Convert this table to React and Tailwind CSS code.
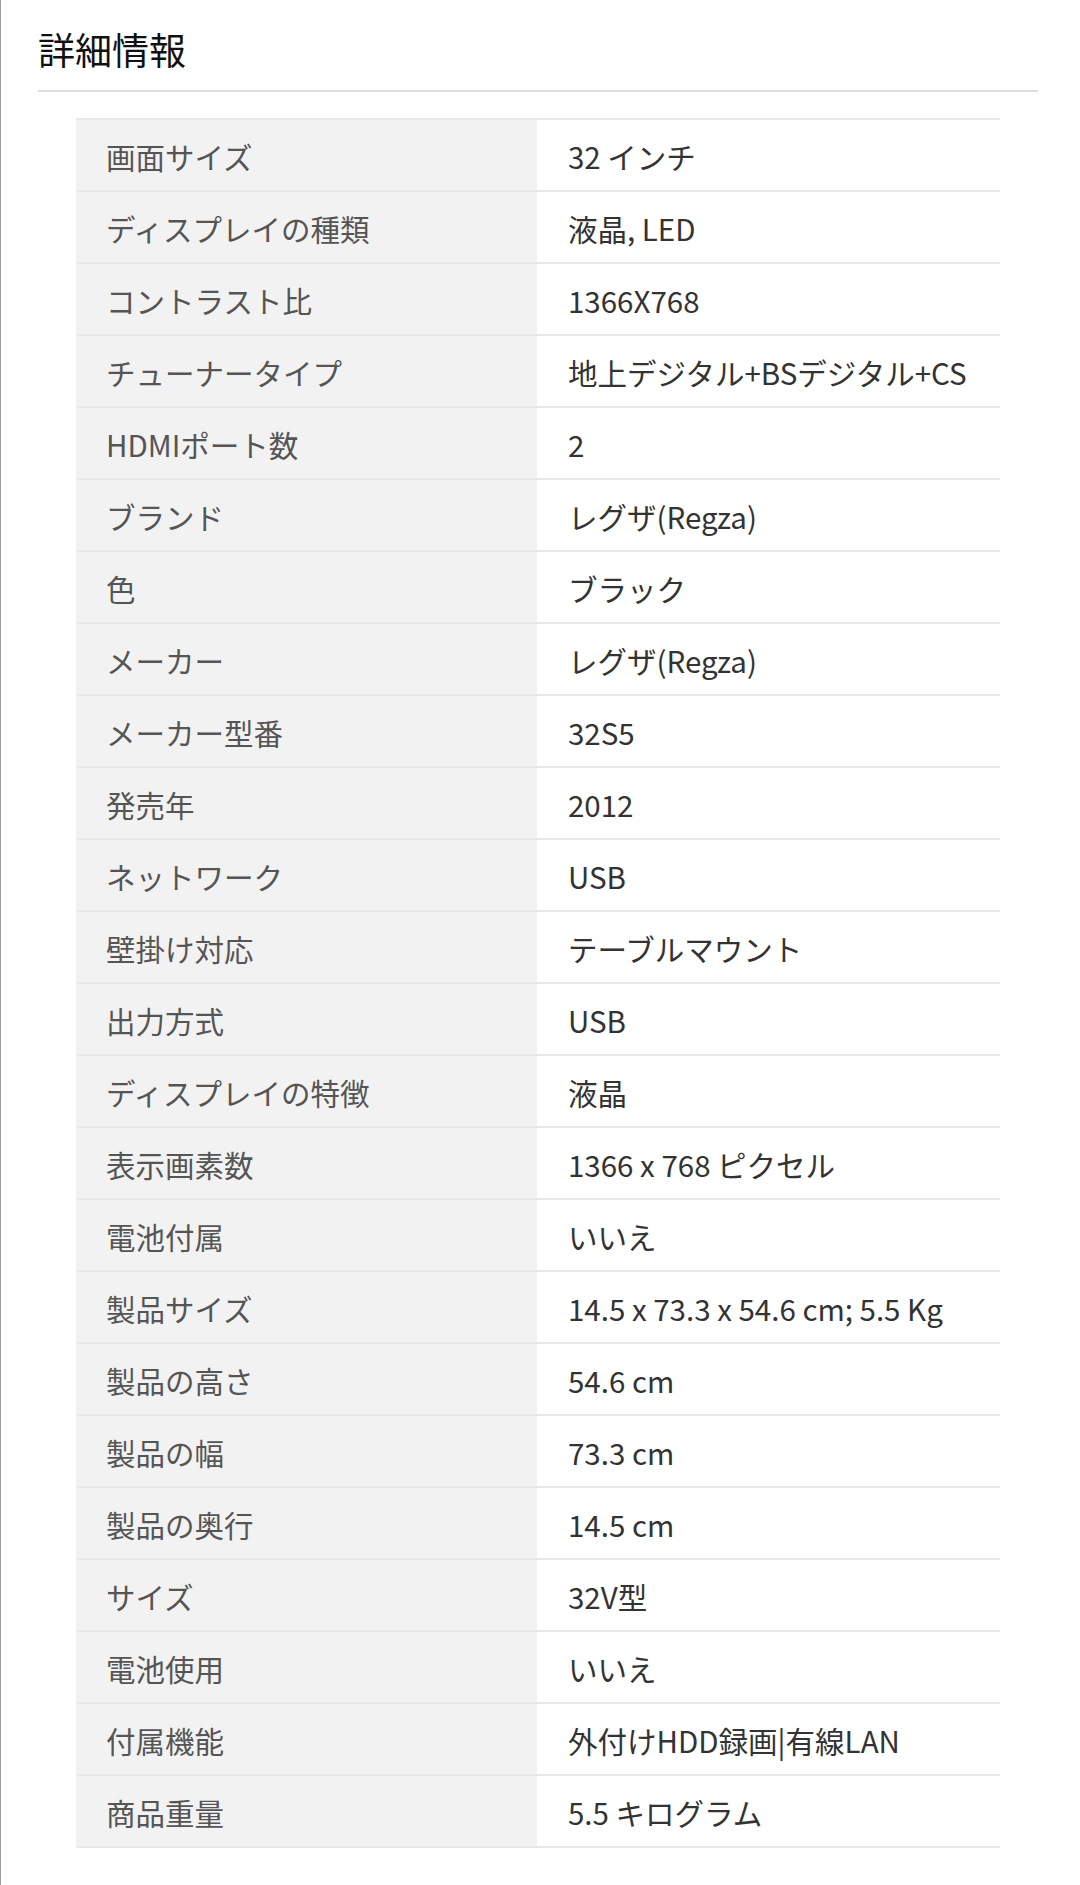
const rows = [
  ['画面サイズ', '32 インチ'],
  ['ディスプレイの種類', '液晶, LED'],
  ['コントラスト比', '1366X768'],
  ['チューナータイプ', '地上デジタル+BSデジタル+CS'],
  ['HDMIポート数', '2'],
  ['ブランド', 'レグザ(Regza)'],
  ['色', 'ブラック'],
  ['メーカー', 'レグザ(Regza)'],
  ['メーカー型番', '32S5'],
  ['発売年', '2012'],
  ['ネットワーク', 'USB'],
  ['壁掛け対応', 'テーブルマウント'],
  ['出力方式', 'USB'],
  ['ディスプレイの特徴', '液晶'],
  ['表示画素数', '1366 x 768 ピクセル'],
  ['電池付属', 'いいえ'],
  ['製品サイズ', '14.5 x 73.3 x 54.6 cm; 5.5 Kg'],
  ['製品の高さ', '54.6 cm'],
  ['製品の幅', '73.3 cm'],
  ['製品の奥行', '14.5 cm'],
  ['サイズ', '32V型'],
  ['電池使用', 'いいえ'],
  ['付属機能', '外付けHDD録画|有線LAN'],
  ['商品重量', '5.5 キログラム'],
]

const App = () => {
  return (
    <div
      className="min-h-[1885px] bg-white border-l border-[#a0a0a0]"
      style={{ fontFamily: '"Noto Sans CJK JP", "Noto Sans", sans-serif' }}
    >
      <div className="ml-[37px] w-[1000px] pt-[22px]">
        <h2 className="text-[37px] leading-[54px] text-[#111111] font-normal">詳細情報</h2>
        <div className="mt-[14px] h-[2px] bg-[#dddddd]"></div>
      </div>

      <div className="ml-[75px] mt-[26px] w-[924px] border-b-2 border-[#e8e8e8]">
        {rows.map(([label, value]) => (
          <div key={label} className="flex border-t-2 border-[#e8e8e8] h-[72px]">
            <div className="w-[461px] bg-[#f2f2f2] pl-[30px] pt-[3px] flex items-center text-[29.5px] text-[#555555]">
              {label}
            </div>
            <div className="flex-1 pl-[31px] pt-[3px] flex items-center text-[29.5px] text-[#333333]">
              {value}
            </div>
          </div>
        ))}
      </div>
    </div>
  )
}

export default App
